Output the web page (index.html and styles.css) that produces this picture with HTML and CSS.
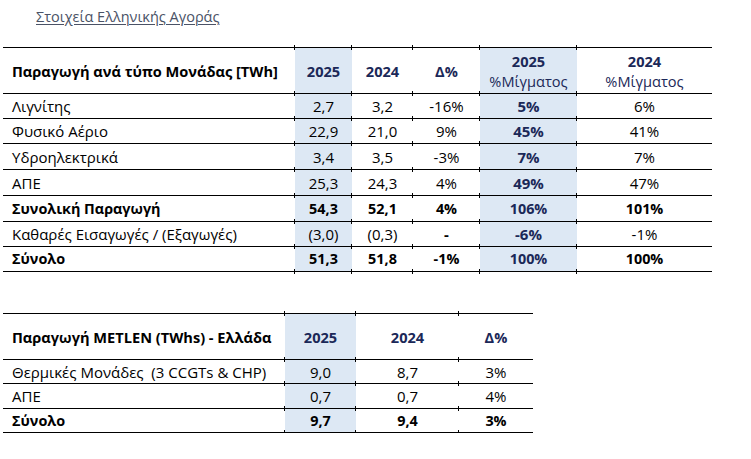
FILE: index.html
```html
<!DOCTYPE html>
<html lang="el">
<head>
<meta charset="utf-8">
<title>Στοιχεία Ελληνικής Αγοράς</title>
<link rel="stylesheet" href="styles.css">
</head>
<body>
<div class="page">
  <h1 class="title">Στοιχεία Ελληνικής Αγοράς</h1>

  <table class="grid grid-market">
    <colgroup>
      <col class="w-label1"><col class="w-57"><col class="w-61"><col class="w-67"><col class="w-97"><col class="w-135">
    </colgroup>
    <thead>
      <tr class="head">
        <th class="label">Παραγωγή ανά τύπο Μονάδας [TWh]</th>
        <th class="hl navy">2025</th>
        <th class="navy">2024</th>
        <th class="navy">Δ%</th>
        <th class="hl navy">2025<br><span class="sub">%Μίγματος</span></th>
        <th class="navy">2024<br><span class="sub">%Μίγματος</span></th>
      </tr>
    </thead>
    <tbody>
      <tr class="r25">
        <td class="label">Λιγνίτης</td><td class="hl">2,7</td><td>3,2</td><td>-16%</td><td class="hl navy b">5%</td><td>6%</td>
      </tr>
      <tr class="r25">
        <td class="label">Φυσικό Αέριο</td><td class="hl">22,9</td><td>21,0</td><td>9%</td><td class="hl navy b">45%</td><td>41%</td>
      </tr>
      <tr class="r26">
        <td class="label">Υδροηλεκτρικά</td><td class="hl">3,4</td><td>3,5</td><td>-3%</td><td class="hl navy b">7%</td><td>7%</td>
      </tr>
      <tr class="r26">
        <td class="label">ΑΠΕ</td><td class="hl">25,3</td><td>24,3</td><td>4%</td><td class="hl navy b">49%</td><td>47%</td>
      </tr>
      <tr class="r26 bold">
        <td class="label">Συνολική Παραγωγή</td><td class="hl">54,3</td><td>52,1</td><td>4%</td><td class="hl navy">106%</td><td>101%</td>
      </tr>
      <tr class="r25">
        <td class="label">Καθαρές Εισαγωγές / (Εξαγωγές)</td><td class="hl">(3,0)</td><td>(0,3)</td><td class="b">-</td><td class="hl navy b">-6%</td><td>-1%</td>
      </tr>
      <tr class="r25 bold last">
        <td class="label">Σύνολο</td><td class="hl">51,3</td><td>51,8</td><td>-1%</td><td class="hl navy">100%</td><td>100%</td>
      </tr>
    </tbody>
  </table>

  <table class="grid grid-metlen">
    <colgroup>
      <col class="w-label2"><col class="w-71"><col class="w-103"><col class="w-74">
    </colgroup>
    <thead>
      <tr class="head">
        <th class="label">Παραγωγή METLEN (TWhs) - Ελλάδα</th>
        <th class="hl navy">2025</th>
        <th class="navy">2024</th>
        <th class="navy">Δ%</th>
      </tr>
    </thead>
    <tbody>
      <tr class="r24">
        <td class="label">Θερμικές Μονάδες&nbsp; (3 CCGTs &amp; CHP)</td><td class="hl">9,0</td><td>8,7</td><td>3%</td>
      </tr>
      <tr class="r25">
        <td class="label">ΑΠΕ</td><td class="hl">0,7</td><td>0,7</td><td>4%</td>
      </tr>
      <tr class="r24 bold last">
        <td class="label">Σύνολο</td><td class="hl">9,7</td><td>9,4</td><td>3%</td>
      </tr>
    </tbody>
  </table>
</div>
</body>
</html>
```

FILE: styles.css
```css
html, body {
  margin: 0;
  padding: 0;
  background: #ffffff;
}

body {
  font-family: "Open Sans", "Noto Sans", "DejaVu Sans", sans-serif;
  font-size: 14.6px;
  color: #000000;
}

.page {
  padding: 7px 0 0 3px;
}

.title {
  margin: 0 0 20px 33px;
  font-size: 14.5px;
  font-weight: 400;
  line-height: 20px;
  color: #4a5266;
  text-decoration: underline;
  text-underline-offset: 2px;
  text-decoration-thickness: 1px;
}

.grid {
  border-collapse: collapse;
  table-layout: fixed;
  border-top: 1px solid #000;
}

.grid-market {
  width: 709px;
  margin-bottom: 41px;
}

.grid-metlen {
  width: 530px;
}

.w-label1 { width: 292px; }
.w-57 { width: 57px; }
.w-61 { width: 61px; }
.w-67 { width: 67px; }
.w-97 { width: 97px; }
.w-135 { width: 135px; }
.w-label2 { width: 282px; }
.w-71 { width: 71px; }
.w-103 { width: 103px; }
.w-74 { width: 74px; }

.grid th,
.grid td {
  position: relative;
  padding: 0;
  text-align: center;
  vertical-align: middle;
  border-bottom: 1px solid #000;
  line-height: 20px;
  white-space: nowrap;
}

.grid td {
  font-size: 15px;
}

.grid th {
  font-weight: 700;
}

.grid .label {
  text-align: left;
  padding-left: 9px;
  color: #000;
}

.head th { height: 45px; }
.r24 td { height: 23px; }
.r25 td { height: 24px; }
.r26 td { height: 25px; }

.hl { background: #dde8f4; }
.navy { color: #1b2858; }
.b { font-weight: 700; font-size: 14.6px; }
.grid .bold td { font-weight: 700; font-size: 14.4px; }

.sub { font-weight: 400; }

/* small ticks where column borders meet the horizontal rules */
.grid th + th::before,
.grid td + td::before {
  content: "";
  position: absolute;
  left: -1px;
  top: -3px;
  width: 1px;
  height: 5px;
  background: #000;
}

.grid .last td + td::after {
  content: "";
  position: absolute;
  left: -1px;
  bottom: -3px;
  width: 1px;
  height: 5px;
  background: #000;
}
```
